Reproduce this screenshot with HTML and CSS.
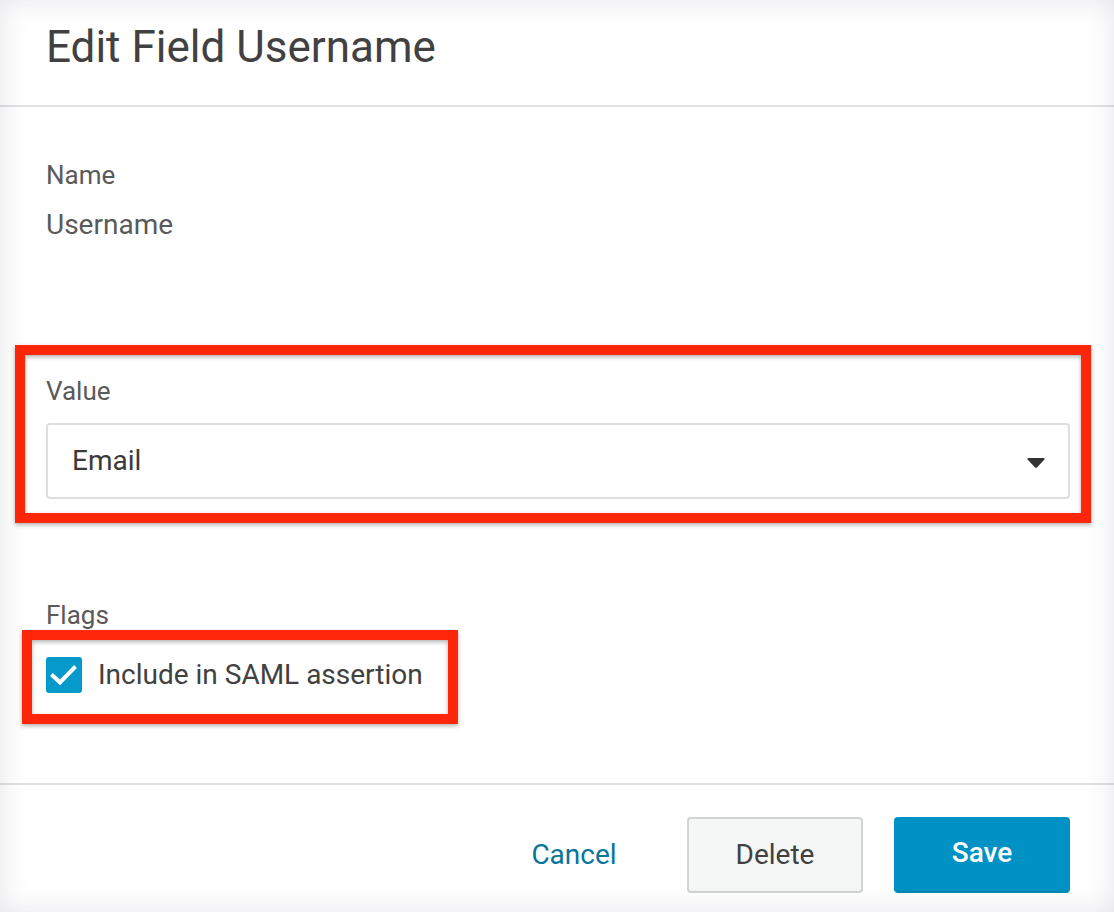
FILE: index.html
```
<!DOCTYPE html>
<html lang="en">
<head>
<meta charset="UTF-8">
<meta name="viewport" content="width=device-width, initial-scale=1.0">
<title>Edit Field Username</title>
<link rel="stylesheet" href="styles.css">
</head>
<body>

<form class="dialog">
    <header class="dialog-header">
        <h1>Edit Field Username</h1>
    </header>

    <main class="dialog-body">
        <div class="field">
            <div class="field-label">Name</div>
            <div class="field-text">Username</div>
        </div>

        <div class="field field-value marked">
            <label class="field-label" for="value">Value</label>
            <div class="select-wrap">
                <select id="value" name="value">
                    <option selected>Email</option>
                </select>
                <svg class="arrow" viewBox="0 0 18 10" aria-hidden="true">
                    <path d="M1.6 0H16.4C17.6 0 18 1 17.2 1.8L10.2 9.2C9.5 9.9 8.5 9.9 7.8 9.2L0.8 1.8C0 1 0.4 0 1.6 0Z" fill="#333333"/>
                </svg>
            </div>
        </div>

        <div class="field field-flags">
            <div class="field-label">Flags</div>
            <label class="flag marked" for="saml">
                <span class="check">
                    <input type="checkbox" id="saml" name="saml" checked>
                    <svg class="tick" viewBox="0 0 36 36" aria-hidden="true">
                        <path d="M5.5 17.5L14 25.5L29.5 9.5" fill="none" stroke="#ffffff" stroke-width="4"/>
                    </svg>
                </span>
                Include in SAML assertion
            </label>
        </div>
    </main>

    <footer class="dialog-footer">
        <button type="button" class="btn btn-link">Cancel</button>
        <button type="button" class="btn btn-default">Delete</button>
        <button type="submit" class="btn btn-primary">Save</button>
    </footer>
</form>

</body>
</html>
```
FILE: styles.css
```
* {
    box-sizing: border-box;
}

body {
    margin: 0;
    background-color: #ffffff;
    color: #414141;
    font-family: Roboto, Arial, sans-serif;
    font-size: 28px;
    line-height: 32px;
}

.dialog {
    display: flex;
    flex-direction: column;
    min-height: 100vh;
    position: relative;
}

/* soft grey shade around the edges */
.dialog::after {
    content: "";
    position: absolute;
    inset: 0;
    box-shadow: inset 0 0 28px rgba(70, 70, 100, 0.14);
    pointer-events: none;
}

.dialog-header {
    padding: 21px 46px 32px;
    border-bottom: 2px solid #e1e2e4;
}

.dialog-header h1 {
    margin: 0;
    font-size: 44px;
    font-weight: 400;
    line-height: 52px;
}

.dialog-body {
    flex: 1;
    padding: 52px 44px 90px 46px;
}

.field {
    display: flex;
    flex-direction: column;
    gap: 18px;
    color: #5a5a5a;
}

.field-value {
    gap: 16px;
    margin-top: 134px;
}

.field-label {
    font-size: 26px;
}

.field-flags {
    margin-top: 100px;
    gap: 26px;
    align-items: flex-start;
}

/* red frame drawn over the content */
.marked {
    position: relative;
}

.marked::after {
    content: "";
    position: absolute;
    border: 10px solid #ff2609;
    filter: drop-shadow(0 2px 2px rgba(0, 0, 0, 0.3));
    pointer-events: none;
}

.field-value::after {
    inset: -30px -21px -24px -31px;
}

.flag::after {
    inset: -27px -35px -31px -24px;
}

.select-wrap {
    position: relative;
}

.select-wrap select {
    display: block;
    width: 100%;
    height: 76px;
    padding: 0 64px 0 24px;
    border: 2px solid #dedede;
    border-radius: 4px;
    background-color: #ffffff;
    color: #3a3a3a;
    font: inherit;
    appearance: none;
}

.arrow {
    position: absolute;
    top: 35px;
    right: 25px;
    width: 18px;
    height: 10px;
    pointer-events: none;
}

.flag {
    display: flex;
    align-items: center;
    gap: 16px;
    color: #414141;
}

.check {
    display: grid;
    width: 36px;
    height: 36px;
}

.check input {
    grid-area: 1 / 1;
    width: 36px;
    height: 36px;
    margin: 0;
    border-radius: 3px;
    background-color: #ffffff;
    border: 2px solid #dedede;
    appearance: none;
}

.check input:checked {
    background-color: #069acb;
    border-color: #069acb;
}

.tick {
    grid-area: 1 / 1;
    width: 36px;
    height: 36px;
    visibility: hidden;
    pointer-events: none;
    z-index: 1;
}

.check input:checked + .tick {
    visibility: visible;
}

.dialog-footer {
    display: flex;
    justify-content: flex-end;
    gap: 31px;
    padding: 32px 44px 19px;
    border-top: 2px solid #e1e2e4;
}

.btn {
    width: 176px;
    height: 76px;
    padding: 0;
    border: 2px solid transparent;
    border-radius: 4px;
    background: none;
    color: #414141;
    font: inherit;
    cursor: pointer;
}

.btn-link {
    width: 164px;
    color: #08759b;
}

.btn-default {
    border-color: #d2d3d3;
    background-color: #f5f6f6;
}

.btn-primary {
    padding-bottom: 4px;
    background-color: #0092c4;
    border-color: #0092c4;
    border-bottom-color: #0888b3;
    color: #ffffff;
    font-weight: 500;
}
```
